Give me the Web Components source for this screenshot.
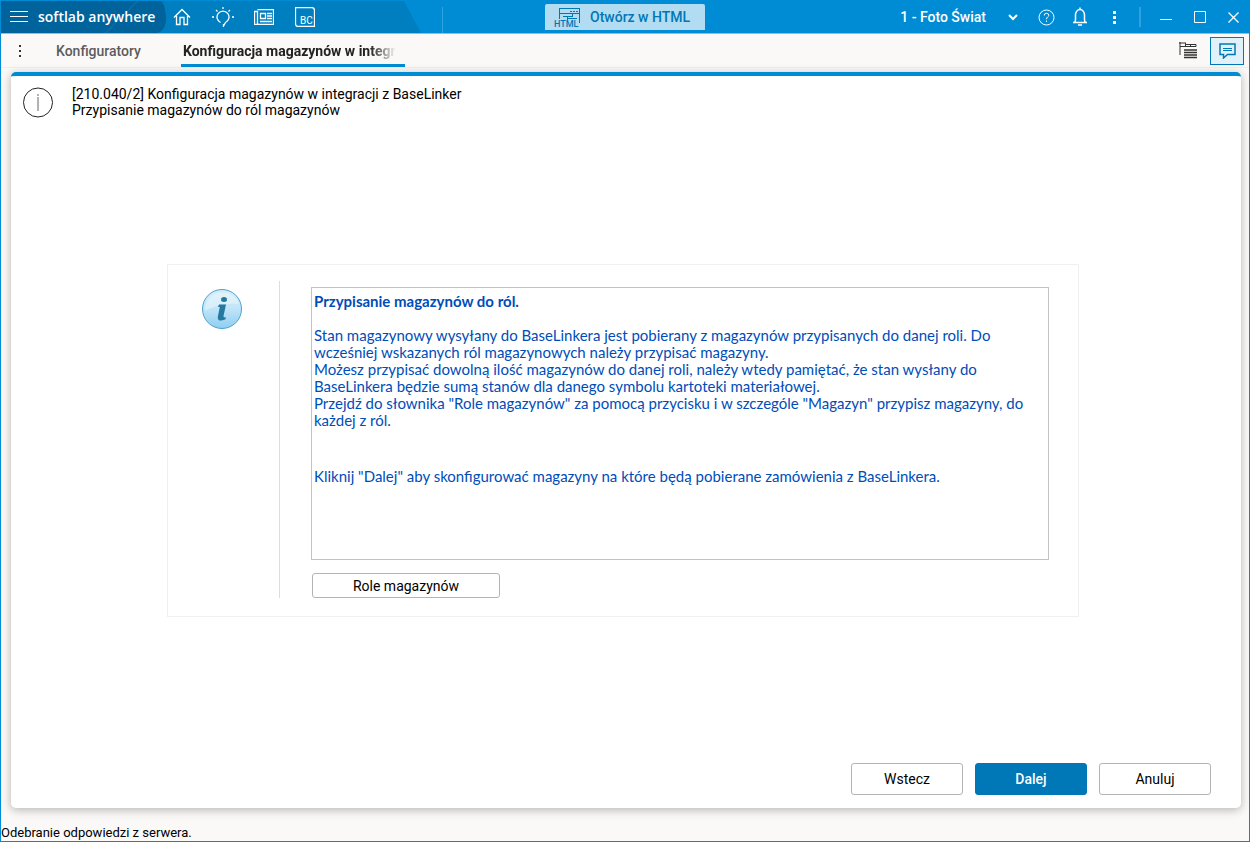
<!DOCTYPE html>
<html lang="pl">
<head>
<meta charset="utf-8">
<title>softlab anywhere</title>
<style>
  html, body {
    height: 100%;
    margin: 0;
  }
  body {
    font-family: Roboto, "Liberation Sans", sans-serif;
    font-size: 14px;
    color: #000;
    --blue: #008cd4;
    --blue-mid: #007fc0;
    --blue-dark: #00639b;
    --accent: #0077b6;
  }
</style>
</head>
<body>
<app-window>
  <title-bar slot="title" brand="softlab anywhere" company="1 - Foto Świat"></title-bar>
  <tab-bar slot="tabs">
    <tab-item>Konfiguratory</tab-item>
    <tab-item active>Konfiguracja magazynów w integracji z BaseLinker</tab-item>
  </tab-bar>
  <wizard-card>
    <span slot="title">[210.040/2] Konfiguracja magazynów w integracji z BaseLinker</span>
    <span slot="subtitle">Przypisanie magazynów do ról magazynów</span>
    <info-panel heading="Przypisanie magazynów do ról.">
      <info-text>Stan magazynowy wysyłany do BaseLinkera jest pobierany z magazynów przypisanych do danej roli. Do<br>wcześniej wskazanych ról magazynowych należy przypisać magazyny.<br>Możesz przypisać dowolną ilość magazynów do danej roli, należy wtedy pamiętać, że stan wysłany do<br>BaseLinkera będzie sumą stanów dla danego symbolu kartoteki materiałowej.<br>Przejdź do słownika "Role magazynów" za pomocą przycisku i w szczególe "Magazyn" przypisz magazyny, do<br>każdej z ról.</info-text>
      <info-text>Kliknij "Dalej" aby skonfigurować magazyny na które będą pobierane zamówienia z BaseLinkera.</info-text>
      <app-button slot="action" wide>Role magazynów</app-button>
    </info-panel>
    <app-button slot="footer">Wstecz</app-button>
    <app-button slot="footer" primary>Dalej</app-button>
    <app-button slot="footer">Anuluj</app-button>
  </wizard-card>
  <span slot="status">Odebranie odpowiedzi z serwera.</span>
</app-window>

<script>
  class BaseElement extends HTMLElement {
    constructor() {
      super();
      const tmpl = document.createElement('template');
      tmpl.innerHTML = this.constructor.markup;
      this.attachShadow({mode: 'open'}).appendChild(tmpl.content.cloneNode(true));
    }
  }

  // Window frame: title bar, tabs, content and status line
  class AppWindow extends BaseElement {
    static markup = `
    <style>
      :host {
        display: flex;
        flex-direction: column;
        box-sizing: border-box;
        height: 100%;
        border: 1px solid var(--blue);
        background: #faf9f8;
      }
      main {
        flex: 1;
        display: flex;
        padding: 4px 8px 0 10px;
      }
      footer {
        padding-top: 17px;
        font-size: 13px;
        line-height: 16px;
      }
    </style>
    <slot name="title"></slot>
    <slot name="tabs"></slot>
    <main><slot></slot></main>
    <footer><slot name="status"></slot></footer>`;
  }

  class TitleBar extends BaseElement {
    static markup = `
    <style>
      :host {
        display: grid;
        grid-template-columns: 1fr auto 1fr;
        height: 32px;
        background: linear-gradient(#2fa2df, #2fa2df) 441px 6px / 1px 26px no-repeat, var(--blue);
        border-bottom: 1px solid #7fc5ea;
        color: #fff;
      }
      div {
        display: flex;
        align-items: center;
      }
      button {
        display: flex;
        align-items: center;
        justify-content: center;
        padding: 0;
        border: 0;
        background: none;
        color: inherit;
        font: inherit;
      }
      svg {
        display: block;
        fill: none;
        stroke: currentColor;
      }
      .left {
        justify-self: start;
        width: 420px;
        background: var(--blue-mid);
        clip-path: polygon(0 0, 403px 0, 100% 100%, 0 100%);
      }
      .brand {
        box-sizing: border-box;
        width: 165px;
        height: 100%;
        gap: 10px;
        padding: 0 0 2px 9px;
        background: linear-gradient(135deg, transparent 96px, #0c6ca3 96px, #0c6ca3 97px, transparent 97px), var(--blue-dark);
        border-radius: 0 6px 10px 0 / 0 18px 14px 0;
        font-family: "Open Sans", sans-serif;
        font-size: 14px;
        font-weight: 600;
      }
      .tools button {
        width: 41px;
        height: 32px;
      }
      .tools {
        margin-left: -5px;
      }
      .open {
        align-self: center;
        justify-content: flex-start;
        gap: 10px;
        padding-left: 9px;
        width: 160px;
        height: 26px;
        border-radius: 2px 2px 0 0;
        background: #b2dcf2;
        color: var(--accent);
        font-size: 14px;
        font-weight: 500;
      }
      .open text {
        font-size: 9px;
        font-weight: 500;
        fill: currentColor;
        stroke: none;
      }
      .right {
        justify-self: end;
      }
      .company {
        gap: 22px;
        margin-right: 11px;
        font-weight: 500;
      }
      .right .icon {
        width: 34px;
        height: 32px;
      }
      .right .icon:last-child {
        width: 32px;
      }
      .sep {
        width: 2px;
        height: 20px;
        margin: 0 8px;
        background: #2fa2df;
      }
    </style>
    <div class="left">
      <div class="brand">
        <button aria-label="Menu"><svg width="18" height="12"><path d="M0 1.500h18M0 6.500h18M0 11.500h18"/></svg></button>
        <span></span>
      </div>
      <div class="tools">
        <button aria-label="Start"><svg width="18" height="18" stroke-width="1.300"><path d="M1 9.500 9 1.500l8 8M3.500 8v8.500h3.500V9.500h4v7h3.500V8"/></svg></button>
        <button aria-label="Podpowiedzi"><svg width="22" height="20" stroke-width="1.300"><path d="M8.500 15.500a6 6 0 1 1 5 0L11.500 19v-2M11 0v2M4 3l1.500 1.500M18 3l-1.500 1.500M0 10h2M20 10h2"/></svg></button>
        <button aria-label="Aktualności"><svg width="20" height="16" stroke-width="1.300"><path d="M3.500.5h16v15h-19v-13h3V15M6.500 4.500h5v5h-5zM13 4.500h5M13 7h5M13 9.500h5M6 12.500h12"/></svg></button>
        <button aria-label="BC"><svg width="20" height="20"><path stroke-width="1.300" d="M.5.5h16q3 0 3 3v16H3.500q-3 0-3-3z"/><text x="5" y="17" font-size="10" fill="currentColor" stroke="none">BC</text></svg></button>
      </div>
    </div>
    <button class="open"><svg width="26" height="22" shape-rendering="crispEdges"><path d="M5.500 13V2.500h20V17M5.500 7.500h20M16 5h2M19 5h2M22 5h2M9 10.500h9V7M13 10.500v3M14 12.500h9"/><text x="0" y="21">HTML</text></svg>Otwórz w HTML</button>
    <div class="right">
      <button class="company"><span></span><svg width="10" height="7" stroke-width="2"><path d="m1 1 4 4 4-4"/></svg></button>
      <button class="icon" aria-label="Pomoc"><svg width="17" height="17"><circle cx="8.500" cy="8.500" r="7.500"/><path d="M6.200 6.500q0-2.200 2.300-2.200t2.300 2.100c0 1.500-2.300 1.500-2.300 3.800M8.500 11.500v1.500"/></svg></button>
      <button class="icon" aria-label="Powiadomienia"><svg width="16" height="20" stroke-width="1.500"><path d="M1 15.500h14M2.500 15.500q1-1 1-3V8a4.500 5.500 0 0 1 9 0v4.500q0 2 1 3M8 .5v2M6 18h4"/></svg></button>
      <button class="icon" aria-label="Więcej"><svg width="3" height="13" stroke-width="3"><path d="M1.500 0v3M1.500 5v3M1.500 10v3"/></svg></button>
      <span class="sep"></span>
      <button class="icon" aria-label="Minimalizuj"><svg width="12" height="12"><path d="M0 8.500h12"/></svg></button>
      <button class="icon" aria-label="Maksymalizuj"><svg width="12" height="12"><path d="M.5.5h11v11H.5z"/></svg></button>
      <button class="icon" aria-label="Zamknij"><svg width="11" height="11" stroke-width="1.300"><path d="m.5.5 10 10m0-10-10 10"/></svg></button>
    </div>`;

    connectedCallback() {
      this.shadowRoot.querySelector('.brand span').textContent = this.getAttribute('brand');
      this.shadowRoot.querySelector('.company span').textContent = this.getAttribute('company');
    }
  }

  class TabBar extends BaseElement {
    static markup = `
    <style>
      :host {
        display: flex;
        height: 33px;
        border-bottom: 1px solid #f0efee;
        padding-right: 5px;
      }
      button {
        display: flex;
        align-items: center;
        justify-content: center;
        padding: 0;
        border: 0;
        background: none;
        color: #333;
      }
      svg {
        display: block;
        fill: none;
        stroke: currentColor;
      }
      .more {
        width: 37px;
      }
      .tree {
        width: 34px;
        margin-left: auto;
        margin-right: 5px;
      }
      .chat {
        box-sizing: border-box;
        align-self: center;
        width: 34px;
        height: 28px;
        border: 1px solid var(--accent);
        background: #e0f1fa;
        color: var(--accent);
      }
    </style>
    <button class="more" aria-label="Lista kart"><svg width="2" height="12" stroke-width="2"><path d="M1 0v2M1 5v2M1 10v2"/></svg></button>
    <slot></slot>
    <button class="tree" aria-label="Widok"><svg width="18" height="17"><path d="M1 0v13M0 1h7M1 4.500h16M6.500 1v3.500M6.500 2.500h10.500v2M11.500 2.500v2"/><path stroke-width="1.500" d="M5 8h13M5 10.500h13M5 13h13M5 15.500h13"/></svg></button>
    <button class="chat" aria-label="Czat"><svg width="17" height="16"><path stroke-width="1.500" d="M1 1h15v10.500H8.500L4.500 15v-3.500H1z"/><path d="M4 5.500h9M4 7.500h9"/></svg></button>`;
  }

  class TabItem extends BaseElement {
    static markup = `
    <style>
      :host {
        display: flex;
        margin-right: 22px;
      }
      button {
        max-width: 224px;
        padding: 3px 18px 0;
        border: 0;
        border-bottom: 3px solid transparent;
        background: none;
        color: #5c5c5c;
        font: 500 14px/16px Roboto, sans-serif;
        text-align: left;
      }
      span {
        display: block;
        overflow: hidden;
        white-space: nowrap;
      }
      :host([active]) button {
        width: 224px;
        padding: 3px 9px 0 2px;
        border-color: var(--blue);
        color: #222;
        font-weight: 700;
      }
      :host([active]) span {
        mask-image: linear-gradient(to right, #000 88%, transparent);
      }
    </style>
    <button role="tab"><span><slot></slot></span></button>`;
  }

  // One step of the configuration wizard
  class WizardCard extends BaseElement {
    static markup = `
    <style>
      :host {
        flex: 1;
        display: flex;
        flex-direction: column;
        border-top: 4px solid var(--blue);
        border-radius: 5px;
        background: #fff;
        box-shadow: 0 2px 10px rgba(0, 0, 0, .28);
      }
      header {
        display: flex;
        gap: 18px;
        padding: 10px 12px 0;
        line-height: 16px;
      }
      svg {
        display: block;
        fill: none;
        stroke: #222;
      }
      header div {
        display: flex;
        flex-direction: column;
      }
      section {
        flex: 1;
        display: flex;
        align-items: center;
        justify-content: center;
        padding-right: 6px;
      }
      footer {
        display: flex;
        justify-content: flex-end;
        gap: 12px;
        padding: 0 30px 13px;
      }
    </style>
    <header>
      <svg width="31" height="32"><circle cx="15" cy="16.500" r="14.500"/><path stroke="#666" d="M15 8v2M15 11v14"/></svg>
      <div><slot name="title"></slot><slot name="subtitle"></slot></div>
    </header>
    <section><slot></slot></section>
    <footer><slot name="footer"></slot></footer>`;
  }

  class InfoPanel extends BaseElement {
    static markup = `
    <style>
      :host {
        display: grid;
        grid-template-columns: 112px 1fr;
        box-sizing: border-box;
        width: 100%;
        max-width: 912px;
        padding: 16px 29px 18px 0;
        border: 1px solid #f0f0f0;
      }
      .icon {
        display: flex;
        justify-content: center;
        padding: 7px 4px 0 0;
        border-right: 1px solid #ddd;
      }
      .content {
        padding: 6px 0 0 31px;
      }
      .text {
        box-sizing: border-box;
        min-height: 273px;
        padding: 5px 2px;
        border: 1px solid #c3c3c3;
        color: #004db8;
        font-family: Lato, sans-serif;
        font-size: 15px;
        line-height: 17px;
        white-space: nowrap;
      }
      h2 {
        margin: 0 0 17px;
        font-size: inherit;
      }
      .action {
        display: flex;
        padding: 13px 1px 0;
      }
    </style>
    <div class="icon">
      <svg width="42" height="42">
        <defs>
          <linearGradient id="ball" x2="0" y2="1"><stop offset="0" stop-color="#d5edfa"/><stop offset=".45" stop-color="#c4e6f8"/><stop offset="1" stop-color="#8fcef2"/></linearGradient>
        </defs>
        <circle cx="21" cy="21" r="19.500" fill="url(#ball)" stroke="#4ea3cb"/>
        <path d="M4 23A17.500 17.500 0 0 1 38 16Q19 14 4 23z" fill="#fff" opacity=".35"/>
        <ellipse cx="23" cy="11.500" rx="3" ry="2.500" fill="#23799f"/>
        <path d="M18 16.500h7l-2.500 11.500q-.3 2 2.500 1.300l-.5 2q-8 3.500-7.700-2.300l2-10H17z" fill="#23799f"/>
      </svg>
    </div>
    <div class="content">
      <div class="text"><h2></h2><slot></slot></div>
      <div class="action"><slot name="action"></slot></div>
    </div>`;

    connectedCallback() {
      this.shadowRoot.querySelector('h2').textContent = this.getAttribute('heading');
    }
  }

  class InfoText extends BaseElement {
    static markup = `
    <style>
      :host {
        display: block;
        margin-bottom: 39px;
      }
      :host(:last-of-type) {
        margin-bottom: 0;
      }
    </style>
    <slot></slot>`;
  }

  class AppButton extends BaseElement {
    static markup = `
    <style>
      :host {
        display: block;
      }
      button {
        display: block;
        box-sizing: border-box;
        width: 112px;
        height: 32px;
        padding: 0;
        border: 1px solid #b4b4b4;
        border-radius: 3px;
        background: #fff;
        color: #000;
        font: 14px/16px Roboto, sans-serif;
      }
      :host([wide]) button {
        width: 188px;
        height: 25px;
      }
      :host([primary]) button {
        border-color: var(--accent);
        background: var(--accent);
        color: #fff;
        font-weight: 500;
      }
    </style>
    <button><slot></slot></button>`;
  }

  customElements.define('app-window', AppWindow);
  customElements.define('title-bar', TitleBar);
  customElements.define('tab-bar', TabBar);
  customElements.define('tab-item', TabItem);
  customElements.define('wizard-card', WizardCard);
  customElements.define('info-panel', InfoPanel);
  customElements.define('info-text', InfoText);
  customElements.define('app-button', AppButton);
</script>
</body>
</html>
